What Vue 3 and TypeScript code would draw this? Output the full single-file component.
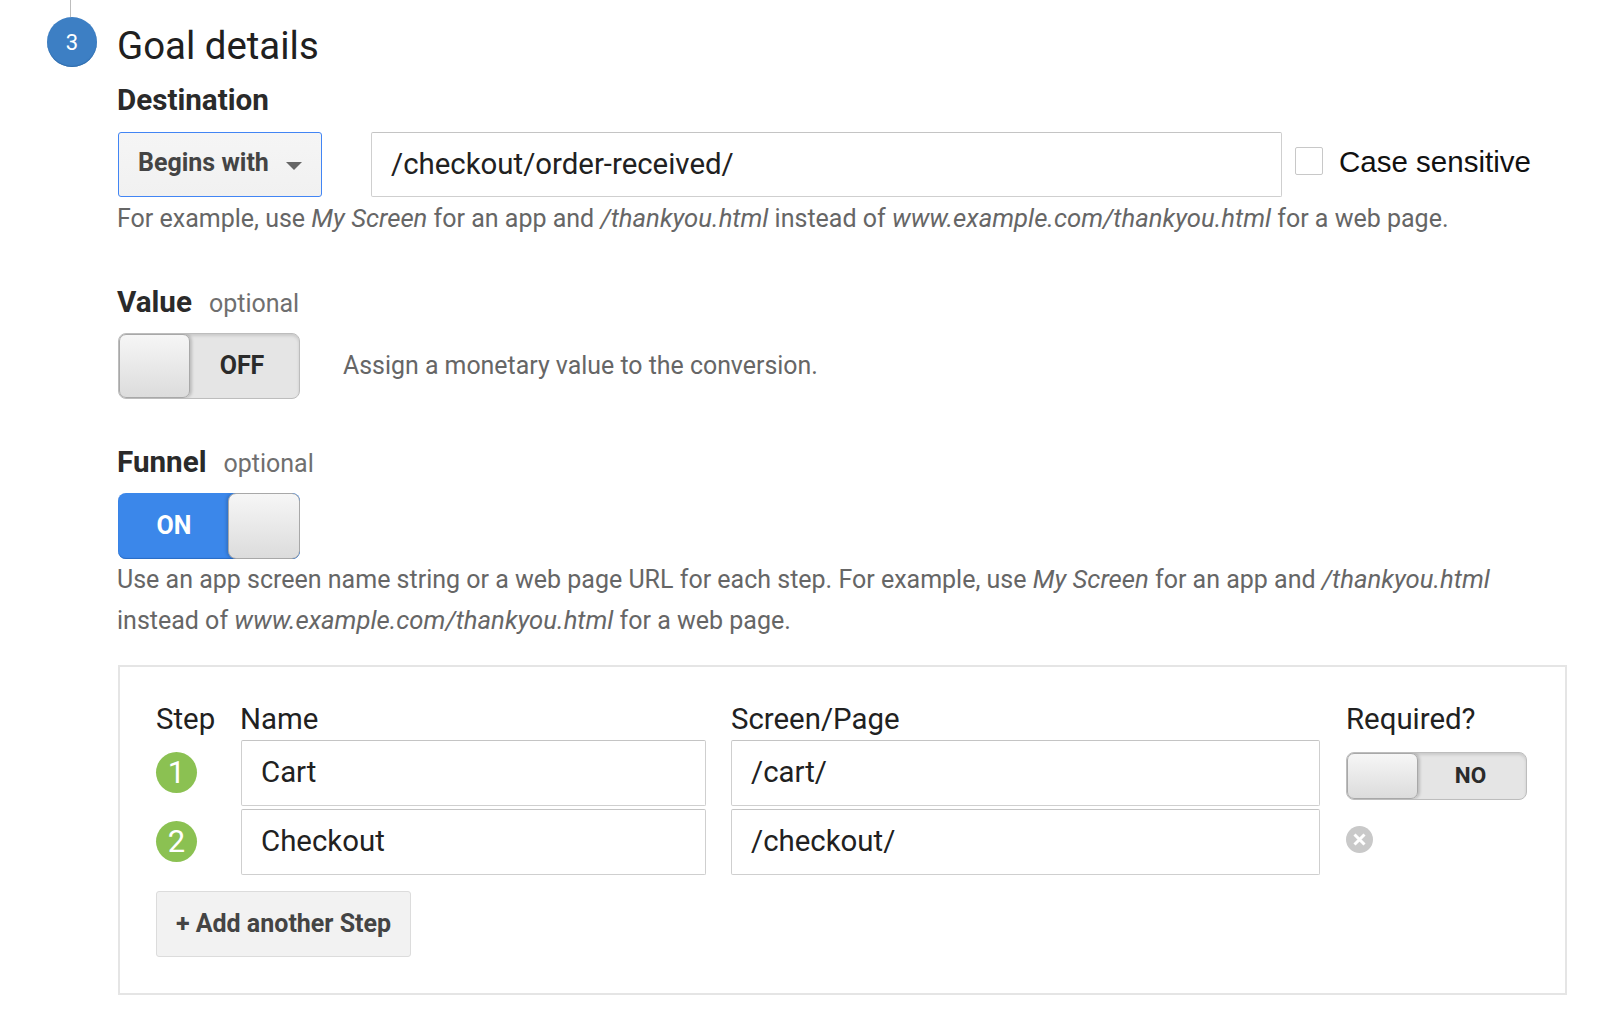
<script setup lang="ts">
const rows = [
  { n: 1, name: 'Cart', page: '/cart/' },
  { n: 2, name: 'Checkout', page: '/checkout/' }
]
</script>

<template>
  <div class="page">
    <div class="rail">
      <div class="line"></div>
      <div class="badge">3</div>
    </div>
    <main class="main">
      <h1 class="title">Goal details</h1>
      <h2 class="label dest">Destination</h2>
      <div class="dest-row">
        <div class="select">Begins with<span class="caret"></span></div>
        <div class="field url">/checkout/order-received/</div>
        <span class="check"></span>
        <span class="case">Case sensitive</span>
      </div>
      <p class="help one">For example, use <i>My Screen</i> for an app and <i>/thankyou.html</i> instead of <i>www.example.com/thankyou.html</i> for a web page.</p>

      <h2 class="label value"><b>Value</b><span class="opt">optional</span></h2>
      <div class="value-row">
        <div class="toggle off"><span class="knob"></span><span class="state">OFF</span></div>
        <span class="help assign">Assign a monetary value to the conversion.</span>
      </div>

      <h2 class="label funnel"><b>Funnel</b><span class="opt">optional</span></h2>
      <div class="toggle on"><span class="state">ON</span><span class="knob"></span></div>
      <p class="help two">Use an app screen name string or a web page URL for each step. For example, use <i>My Screen</i> for an app and <i>/thankyou.html</i> instead of <i>www.example.com/thankyou.html</i> for a web page.</p>

      <section class="box">
        <div class="grid">
          <div class="head">Step</div>
          <div class="head">Name</div>
          <div class="head">Screen/Page</div>
          <div class="head">Required?</div>
          <template v-for="r in rows" :key="r.n">
            <div class="num-cell"><span class="num">{{ r.n }}</span></div>
            <div class="field cell">{{ r.name }}</div>
            <div class="field cell">{{ r.page }}</div>
            <div v-if="r.n === 1" class="req-cell">
              <div class="toggle small off"><span class="knob"></span><span class="state">NO</span></div>
            </div>
            <div v-else class="req-cell">
              <svg class="remove" viewBox="0 0 27 27" width="27" height="27" aria-label="Remove">
                <circle cx="13.5" cy="13.5" r="13.5" fill="#c9c9c9" />
                <path d="M8.5 8.5l10 10M18.5 8.5l-10 10" stroke="#fff" stroke-width="3" fill="none" />
              </svg>
            </div>
          </template>
        </div>
        <button class="add" type="button">+ Add another Step</button>
      </section>
    </main>
  </div>
</template>

<style>
html, body { margin: 0; background: #fff; }
</style>

<style scoped>
.page {
  display: flex;
  width: 1600px;
  height: 1022px;
  overflow: hidden;
  font-family: Roboto, sans-serif;
  color: #212121;
  background: #fff;
}
.rail {
  width: 118px;
  flex: none;
  padding-left: 47px;
  box-sizing: border-box;
}
.line {
  width: 1px;
  height: 17px;
  margin-left: 23px;
  background: #bdbdbd;
}
.badge {
  width: 50px;
  height: 50px;
  border-radius: 50%;
  background: #3d7fc4;
  box-shadow: inset 0 -1px 1px #2f6cab;
  color: #fff;
  font-size: 22px;
  display: flex;
  align-items: center;
  justify-content: center;
}
.main { width: 1449px; flex: none; }
.title {
  margin: 23px 0 0 -1px;
  font-size: 38.4px;
  line-height: 46px;
  font-weight: 400;
  color: #202020;
}
.label {
  margin: 0 0 0 -1px;
  font-size: 29.6px;
  line-height: 34px;
  font-weight: 700;
  color: #2a2a2a;
}
.label b { font-weight: 700; }
.dest { margin-top: 14px; }
.opt {
  font-size: 25px;
  font-weight: 400;
  color: #6f6f6f;
  margin-left: 17px;
}
.dest-row {
  display: flex;
  align-items: center;
  margin-top: 15px;
}
.select {
  width: 204px;
  height: 65px;
  box-sizing: border-box;
  border: 1px solid #4285f4;
  border-radius: 3px;
  background: linear-gradient(#f5f5f5, #f1f1f1);
  padding: 0 0 4px 19px;
  display: flex;
  align-items: center;
  font-size: 25px;
  font-weight: 700;
  color: #444;
}
.caret {
  width: 0;
  height: 0;
  margin-left: 17px;
  margin-top: 6px;
  border-left: 8px solid transparent;
  border-right: 8px solid transparent;
  border-top: 8px solid #666;
}
.field {
  box-sizing: border-box;
  border: 1px solid #cfcfcf;
  border-top-color: #c4c4c4;
  border-radius: 2px;
  background: #fff;
  padding: 0 0 2px 19px;
  display: flex;
  align-items: center;
  font-size: 29.4px;
  color: #212121;
}
.url {
  width: 911px;
  height: 65px;
  margin-left: 49px;
}
.check {
  width: 28px;
  height: 28px;
  margin: -7px 0 0 13px;
  box-sizing: border-box;
  border: 1px solid #c8c8c8;
  border-radius: 2px;
}
.case {
  margin: -5px 0 0 16px;
  font-family: "Liberation Sans", Arial, sans-serif;
  font-size: 29.5px;
  color: #111;
}
.help {
  margin: 0 0 0 -1px;
  font-size: 25px;
  color: #666;
}
.help i { font-size: 25.7px; }
.one { margin-top: 3px; line-height: 36px; }
.value { margin-top: 47px; line-height: 36px; }
.value-row {
  display: flex;
  align-items: center;
  margin-top: 11px;
}
.assign { margin-left: 43px; font-size: 24.9px; padding-bottom: 2px; }
.funnel { margin-top: 45px; line-height: 36px; }
.funnel + .toggle { margin-top: 11px; }
.toggle {
  width: 182px;
  height: 66px;
  box-sizing: border-box;
  border: 1px solid #bdbdbd;
  border-radius: 8px;
  display: flex;
  align-items: stretch;
  overflow: hidden;
  font-size: 25px;
  font-weight: 700;
}
.toggle.off {
  background: #e5e5e5;
  box-shadow: inset 0 2px 3px rgba(0, 0, 0, 0.12);
  color: #2b2b2b;
}
.toggle.off .state { padding: 0 5px 2px 0; }
.toggle.small.off .state { padding: 0 3px 3px 0; }
.toggle.on {
  border: 0;
  background: #3b87ea;
  box-shadow: inset 0 -1px 1px #2a6cc4;
  color: #fff;
}
.toggle.on .state { padding: 0 0 2px 2px; }
.knob {
  width: 71px;
  flex: none;
  box-sizing: border-box;
  border: 1px solid #a8a8a8;
  border-radius: 7px;
  background: linear-gradient(#f6f6f6, #dcdcdc);
  box-shadow: 2px 0 3px rgba(0, 0, 0, 0.18);
}
.on .knob {
  width: 72px;
  border-radius: 8px;
  box-shadow: -2px 0 3px rgba(0, 0, 0, 0.15);
}
.state {
  flex: 1;
  display: flex;
  align-items: center;
  justify-content: center;
}
.two {
  margin-top: 0;
  line-height: 41px;
  width: 1400px;
}
.box {
  width: 1449px;
  height: 330px;
  box-sizing: border-box;
  border: 2px solid #e5e5e5;
  margin-top: 24px;
  padding: 32px 0 0 36px;
}
.grid {
  display: grid;
  grid-template-columns: 85px 465px 614px 207px;
  grid-template-rows: 38px 66px 66px;
  row-gap: 3px;
}
.grid > :nth-child(4n + 3) { margin-left: 25px; }
.grid > :nth-child(4n) { margin-left: 26px; }
.grid > :nth-child(2) { margin-left: -1px; }
.head { font-size: 29.4px; line-height: 40px; color: #212121; }
.num-cell, .req-cell { display: flex; align-items: flex-start; }
.num-cell { padding-top: 12px; }
.num {
  width: 41px;
  height: 41px;
  border-radius: 50%;
  background: #8bc152;
  color: #fff;
  font-size: 31px;
  display: flex;
  align-items: center;
  justify-content: center;
}
.cell { height: 66px; }
.req-cell { padding-top: 12px; }
.toggle.small { height: 48px; width: 182px; font-size: 22.5px; }
.remove { margin-top: 5px; }
.add {
  display: block;
  width: 255px;
  height: 66px;
  margin-top: 16px;
  box-sizing: border-box;
  border: 1px solid #dcdcdc;
  border-radius: 3px;
  background: #f2f2f2;
  font-family: Roboto, sans-serif;
  font-size: 25px;
  font-weight: 700;
  color: #444;
  padding: 0 0 1px;
}
</style>
